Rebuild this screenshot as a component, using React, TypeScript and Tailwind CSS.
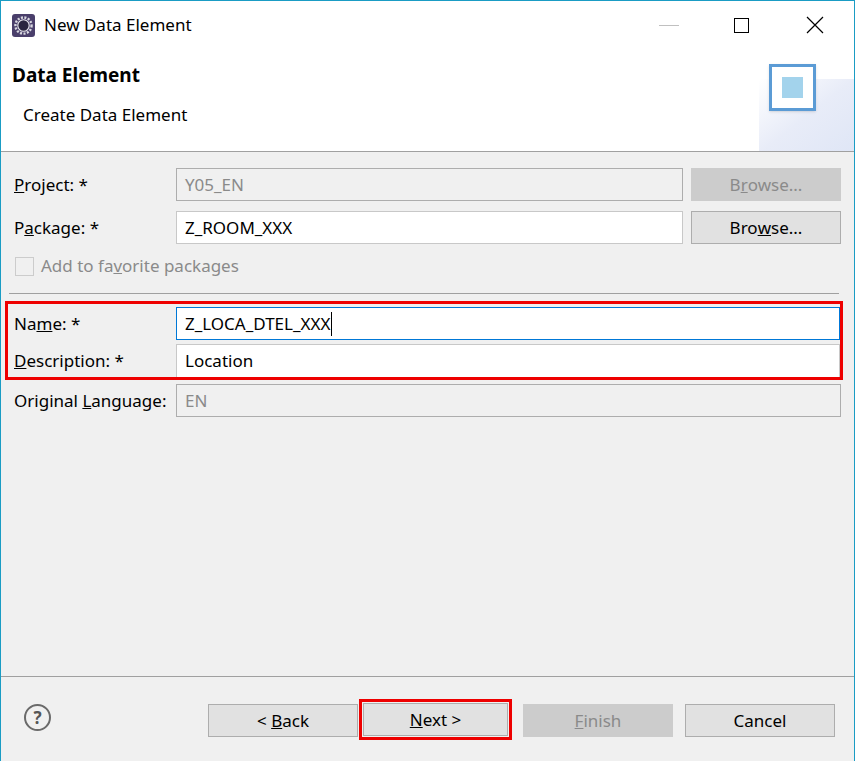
import React from 'react';

const F = { fontFamily: '"Noto Sans", "Open Sans", sans-serif' };

function Btn({ children, disabled, className = '' }: { children: React.ReactNode; disabled?: boolean; className?: string }) {
  return (
    <div
      className={`h-[33px] flex items-center justify-center border text-[17px] ${
        disabled ? 'bg-[#cccccc] border-[#cccccc] text-[#8a8a8a]' : 'bg-[#e1e1e1] border-[#adadad] text-black'
      } ${className}`}
    >
      {children}
    </div>
  );
}

function Field({ value, disabled, focused, className = '' }: { value: string; disabled?: boolean; focused?: boolean; className?: string }) {
  return (
    <div
      className={`h-[33px] flex items-center px-[8px] border text-[17px] ${
        disabled ? 'bg-[#f0f0f0] border-[#adadad] text-[#8a8a8a]' : focused ? 'bg-white border-[#0078d7] text-black' : 'bg-white border-[#c8c8c8] text-black'
      } ${className}`}
    >
      {value}
      {focused && <span className="w-px h-[24px] bg-black ml-px" />}
    </div>
  );
}

export default function App() {
  return (
    <div style={F} className="w-[855px] h-[761px] bg-[#f0f0f0] border-x border-t border-[#1a9cc4] flex flex-col overflow-hidden text-black">
      {/* Title bar */}
      <div className="h-[48px] bg-white flex items-center shrink-0">
        <div className="ml-[11px] w-[23px] h-[23px] bg-[#4a3f6b] rounded-[3px] flex items-center justify-center">
          <svg width="19" height="19" viewBox="0 0 20 20">
            <circle cx="10" cy="10" r="8.5" fill="none" stroke="#d8d8e0" strokeWidth="2.5" strokeDasharray="2.2 1.5" />
            <circle cx="10" cy="10" r="6" fill="#2a2540" stroke="#e8e8ee" strokeWidth="1.2" />
          </svg>
        </div>
        <span className="ml-[9px] text-[17px]">New Data Element</span>
        <div className="ml-auto flex items-center">
          <div className="w-[20px] h-px bg-[#c0c0c0] mr-[55px]" />
          <div className="w-[15px] h-[15px] border border-black mr-[57px]" />
          <svg width="18" height="18" viewBox="0 0 18 18" className="mr-[30px]">
            <path d="M1 1 L17 17 M17 1 L1 17" stroke="black" strokeWidth="1.2" />
          </svg>
        </div>
      </div>

      {/* Header */}
      <div className="h-[103px] bg-white flex border-b border-[#a0a0a0] shrink-0 relative overflow-hidden">
        <div className="flex-1 pl-[11px] pt-[12px]">
          <div className="text-[19px] font-bold">Data Element</div>
          <div className="text-[17px] ml-[11px] mt-[12px]">Create Data Element</div>
        </div>
        <div className="absolute right-0 top-[30px] w-[95px] h-[75px] bg-gradient-to-br from-transparent via-[#e8ecf8] to-[#dfe6f6]" />
        <div className="relative mr-[38px] mt-[15px] w-[47px] h-[47px] bg-white border-[3px] border-[#5b9bd5] flex items-center justify-center shadow">
          <div className="w-[21px] h-[21px] bg-[#a3d3ec]" />
        </div>
      </div>

      {/* Body */}
      <div className="flex-1 px-[8px] pt-[16px] flex flex-col text-[17px]">
        <div className="flex items-center h-[33px] mb-[10px]">
          <span className="w-[167px] pl-[5px]"><u>P</u>roject: *</span>
          <Field value="Y05_EN" disabled className="w-[507px]" />
          <Btn disabled className="ml-[8px] w-[150px]">B<u>r</u>owse...</Btn>
        </div>
        <div className="flex items-center h-[33px] mb-[10px]">
          <span className="w-[167px] pl-[5px]">P<u>a</u>ckage: *</span>
          <Field value="Z_ROOM_XXX" className="w-[507px]" />
          <Btn className="ml-[8px] w-[150px]">Bro<u>w</u>se...</Btn>
        </div>
        <div className="flex items-center h-[24px] pl-[6px] text-[#8a8a8a]">
          <div className="w-[19px] h-[19px] border border-[#cccccc] bg-[#f0f0f0]" />
          <span className="ml-[7px]">Add to fa<u>v</u>orite packages</span>
        </div>
        <div className="h-px bg-[#a0a0a0] mt-[15px] mr-[7px]" />
        <div className="mt-[7px] -ml-[4px] mr-[3px] border-[3px] border-[#ee0000] pl-[3px] pt-[3px] pb-0 flex flex-col gap-[4px]">
          <div className="flex items-center h-[33px]">
            <span className="w-[165px] pl-[3px]">Na<u>m</u>e: *</span>
            <Field value="Z_LOCA_DTEL_XXX" focused className="flex-1" />
          </div>
          <div className="flex items-center h-[33px]">
            <span className="w-[165px] pl-[3px]"><u>D</u>escription: *</span>
            <Field value="Location" className="flex-1 border-b-0" />
          </div>
        </div>
        <div className="flex items-center h-[31px] mt-[5px]">
          <span className="w-[167px] pl-[5px]">Original <u>L</u>anguage:</span>
          <Field value="EN" disabled className="w-[665px] h-[31px]" />
        </div>
      </div>

      {/* Footer */}
      <div className="h-[85px] border-t border-[#a0a0a0] shrink-0 flex items-start pt-[24px] text-[17px]">
        <div className="ml-[23px] mt-[3px] w-[27px] h-[27px] rounded-full border-[2px] border-[#6a6a6a] flex items-center justify-center text-[17px] text-[#555] font-bold">?</div>
        <div className="ml-auto flex items-center mr-[19px]">
          <Btn className="w-[150px]">&lt;&nbsp;<u>B</u>ack</Btn>
          <div className="ml-[1px] border-[3px] border-[#ee0000] p-[1px] -mt-[2px]">
            <Btn className="w-[145px]"><u>N</u>ext &gt;</Btn>
          </div>
          <Btn disabled className="ml-[11px] w-[150px]"><u>F</u>inish</Btn>
          <Btn className="ml-[12px] w-[150px]">Cancel</Btn>
        </div>
      </div>
    </div>
  );
}
